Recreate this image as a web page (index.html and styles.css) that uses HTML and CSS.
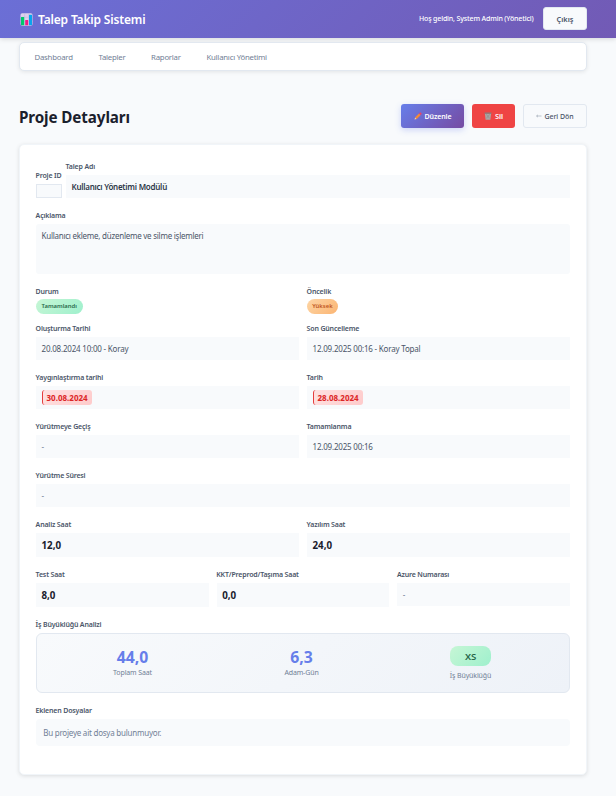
FILE: index.html
```html
<!DOCTYPE html>
<html lang="tr">
<head>
<meta charset="utf-8">
<title>Talep Takip Sistemi</title>
<link rel="stylesheet" href="styles.css">
</head>
<body>
<header class="header">
  <div class="brand">
    <svg class="brand-icon" viewBox="0 0 13 13"><rect x=".5" y=".3" width="12" height="12.4" rx="1.6" fill="#dcd0ec"/><path d="M4.6 .5v12M8.6 .5v12M.5 4.3h12M.5 8.5h12" stroke="#c3b4e0" stroke-width=".5"/><rect x="1" y="4" width="3.2" height="8.3" rx=".3" fill="#00c96b"/><rect x="5.2" y="7" width="3" height="5.3" rx=".3" fill="#f01a86"/><rect x="9" y="1.8" width="3" height="10.5" rx=".3" fill="#08a5ee"/></svg>
    <span class="brand-name">Talep Takip Sistemi</span>
  </div>
  <div class="user">
    <span class="welcome">Hoş geldin, System Admin (Yönetici)</span>
    <a class="btn logout">Çıkış</a>
  </div>
</header>
<nav class="nav">
  <a>Dashboard</a><a>Talepler</a><a>Raporlar</a><a>Kullanıcı Yönetimi</a>
</nav>
<main class="main">
  <div class="page-head">
    <h1>Proje Detayları</h1>
    <div class="actions">
      <a class="btn edit"><svg class="ico" viewBox="0 0 8 8"><path d="M.5 7.6l.7-2.4L2.8 6.9z" fill="#f6cfa0"/><path d="M1.2 5.2L5 1.4l1.7 1.7L2.8 6.9z" fill="#f58a35"/><path d="M5 1.4l.9-.8q.4-.4.9 0l.7.8q.4.4 0 .8l-.8.9z" fill="#ee4164"/></svg>Düzenle</a>
      <a class="btn delete"><svg class="ico" viewBox="0 0 8 8"><path d="M.9 1.4h6.2L6.4 7.8H1.6z" fill="#a9a5a4"/><path d="M2.4 2.4l3.2 4M5.6 2.4l-3.2 4" stroke="#8d8381" stroke-width=".5"/><rect x=".5" y=".6" width="7" height="1.2" rx=".4" fill="#857c7a"/></svg>Sil</a>
      <a class="btn back"><svg class="arrow" viewBox="0 0 6 4"><path d="M.5 2h5M2 .8L.6 2 2 3.2" fill="none" stroke="#a3acb9" stroke-width=".7"/></svg>Geri Dön</a>
    </div>
  </div>
  <section class="card">
    <div class="row first">
      <div class="field id"><label>Proje ID</label><div class="id-box"></div></div>
      <div class="field grow"><label>Talep Adı</label><div class="value title">Kullanıcı Yönetimi Modülü</div></div>
    </div>
    <div class="row"><div class="field"><label>Açıklama</label><div class="value description">Kullanıcı ekleme, düzenleme ve silme işlemleri</div></div></div>
    <div class="row cols-2 status">
      <div class="field"><label>Durum</label><span class="pill done">Tamamlandı</span></div>
      <div class="field"><label>Öncelik</label><span class="pill high">Yüksek</span></div>
    </div>
    <div class="row cols-2">
      <div class="field"><label>Oluşturma Tarihi</label><div class="value">20.08.2024 10:00 - Koray</div></div>
      <div class="field"><label>Son Güncelleme</label><div class="value">12.09.2025 00:16 - Koray Topal</div></div>
    </div>
    <div class="row cols-2">
      <div class="field"><label>Yaygınlaştırma tarihi</label><div class="value"><span class="date">30.08.2024</span></div></div>
      <div class="field"><label>Tarih</label><div class="value"><span class="date">28.08.2024</span></div></div>
    </div>
    <div class="row cols-2">
      <div class="field"><label>Yürütmeye Geçiş</label><div class="value empty">-</div></div>
      <div class="field"><label>Tamamlanma</label><div class="value">12.09.2025 00:16</div></div>
    </div>
    <div class="row"><div class="field"><label>Yürütme Süresi</label><div class="value empty">-</div></div></div>
    <div class="row cols-2">
      <div class="field"><label>Analiz Saat</label><div class="value hours">12,0</div></div>
      <div class="field"><label>Yazılım Saat</label><div class="value hours">24,0</div></div>
    </div>
    <div class="row cols-3">
      <div class="field"><label>Test Saat</label><div class="value hours">8,0</div></div>
      <div class="field"><label>KKT/Preprod/Taşıma Saat</label><div class="value hours">0,0</div></div>
      <div class="field"><label>Azure Numarası</label><div class="value empty">-</div></div>
    </div>
    <div class="row"><div class="field"><label>İş Büyüklüğü Analizi</label>
      <div class="analysis">
        <div class="metric"><strong>44,0</strong><span>Toplam Saat</span></div>
        <div class="metric"><strong>6,3</strong><span>Adam-Gün</span></div>
        <div class="metric"><b class="size">XS</b><span>İş Büyüklüğü</span></div>
      </div></div></div>
    <div class="row"><div class="field"><label>Eklenen Dosyalar</label><div class="files">Bu projeye ait dosya bulunmuyor.</div></div></div>
  </section>
</main>
</body>
</html>
```
FILE: styles.css
```css
* { box-sizing: border-box; }
body {
  margin: 0;
  height: 796px;
  overflow: hidden;
  background: #f8fafc;
  color: #4a5568;
  font-family: "Noto Sans", "Open Sans", sans-serif;
  font-size: 8px;
}
.header {
  height: 38px;
  padding: 0 29px 0 20px;
  display: flex;
  align-items: center;
  justify-content: space-between;
  color: #fff;
  background: linear-gradient(135deg, #6b6fd6 0%, #725ab5 100%);
  box-shadow: 0 1px 5px rgba(0, 0, 0, .15);
}
.brand { display: flex; align-items: center; gap: 5px; padding-top: 1px; }
.brand-icon { width: 13px; height: 13px; }
.brand-name { font-size: 12px; font-weight: 600; letter-spacing: -.17px; line-height: 16px; }
.user { display: flex; align-items: center; gap: 9.5px; padding-bottom: 1px; }
.welcome { font-size: 7px; font-weight: 500; letter-spacing: -.15px; }
.btn {
  display: flex;
  align-items: center;
  justify-content: center;
  height: 24px;
  border-radius: 3px;
  font-weight: 600;
}
.logout {
  width: 44px;
  height: 23px;
  border: 1px solid #e2e8f0;
  background: #f8fafc;
  color: #4a5568;
  font-size: 7.4px;
}
.nav {
  height: 29px;
  margin: 4px 29px 0 19px;
  padding: 0 14.5px;
  display: flex;
  align-items: center;
  gap: 25.7px;
  background: #fff;
  border: 1px solid #e2e8f0;
  border-radius: 5px;
  box-shadow: 0 1px 4px rgba(0, 0, 0, .09);
  color: #718096;
  font-size: 7.8px;
  letter-spacing: -.24px;
}
.main { padding: 33px 29px 0 19px; }
.page-head { display: flex; justify-content: space-between; height: 24px; }
h1 { margin: 2px 0 0; font-size: 15.2px; letter-spacing: -.1px; line-height: 22px; font-weight: 700; color: #1a202c; }
.actions { display: flex; gap: 8px; }
.ico { width: 8px; height: 8px; margin-right: 3px; }
.arrow { width: 6px; height: 4px; margin-right: 2px; }
.edit {
  width: 63px;
  color: #fff;
  font-size: 7px;
  letter-spacing: -.1px;
  background: linear-gradient(135deg, #667eea, #764ba2);
  box-shadow: 0 2px 6px rgba(102, 126, 234, .3);
}
.delete { width: 43px; color: #fff; background: #ef4444; font-size: 7.4px; }
.back { width: 64px; border: 1px solid #e2e8f0; color: #4a5568; font-size: 7px; letter-spacing: -.05px; font-weight: 500; }
.card {
  height: 631px;
  margin-top: 16px;
  padding: 17px 16px 16px;
  background: #fff;
  border: 1px solid #f1f5f9;
  border-radius: 5px;
  box-shadow: 0 1px 4px rgba(0, 0, 0, .12);
}
.row { margin-bottom: 13px; }
.status { margin-bottom: 10px; }
.first { display: flex; align-items: flex-end; gap: 4px; }
.grow { flex: 1; }
.cols-2, .cols-3 { display: grid; gap: 8px; align-items: start; }
.cols-2 { grid-template-columns: repeat(2, 1fr); }
.cols-3 { grid-template-columns: repeat(3, 1fr); }
label {
  display: block;
  height: 10px;
  margin: 0 0 3px -.4px;
  line-height: 10px;
  font-size: 7px;
  font-weight: 600;
  letter-spacing: -.17px;
  white-space: nowrap;
}
.field.id { width: 26px; }
.id-box { height: 14px; border: 1px solid #e2e8f0; background: #f8fafc; }
.value {
  height: 23px;
  padding: 0 5.5px;
  display: flex;
  align-items: center;
  background: #f8fafc;
  line-height: 12px;
  font-size: 8px;
  letter-spacing: -.2px;
}
.title { font-weight: 600; letter-spacing: -.25px; color: #2d3748; }
.description { height: 50px; padding-top: 6px; align-items: flex-start; border-radius: 3px; letter-spacing: -.25px; }
.empty { color: #718096; }
.hours { height: 24px; padding-top: 1px; font-size: 9.75px; letter-spacing: 0; font-weight: 700; color: #1a202c; }
.pill {
  display: block;
  width: max-content;
  height: 15px;
  margin-top: -1px;
  padding: 0 5.6px;
  border-radius: 8px;
  font-size: 5.9px;
  font-weight: 600;
  line-height: 15px;
}
.done { color: #276749; background: linear-gradient(135deg, #c6f6d5, #9ff0cd); }
.high { padding: 0 5.2px; color: #c05621; background: linear-gradient(135deg, #fdd5a5, #fbb573); }
.date {
  height: 15px;
  padding: 0 4.5px 0 4px;
  border-left: 1px solid #e53e3e;
  border-radius: 3px;
  background: linear-gradient(135deg, #fee2e2, #fecaca);
  color: #dc2626;
  font-size: 8px;
  letter-spacing: 0;
  font-weight: 700;
  line-height: 16px;
}
.analysis {
  height: 60px;
  padding: 12px 14px 12px 11px;
  display: grid;
  grid-template-columns: repeat(3, 1fr);
  border: 1px solid #e2e8f0;
  border-radius: 6px;
  background: linear-gradient(135deg, #f8fafc, #eef2f8);
}
.metric { display: flex; flex-direction: column; align-items: center; color: #718096; font-size: 7px; letter-spacing: -.13px; line-height: 10px; }
.metric:not(:last-child) span { margin-top: -1.5px; }
.metric strong { margin-bottom: 1.5px; color: #667eea; font-size: 15.74px; letter-spacing: 0; line-height: 22px; }
.size {
  width: 41px;
  height: 20px;
  margin-bottom: 4.5px;
  border-radius: 8px;
  background: linear-gradient(135deg, #c6f6d5, #9ff0cd);
  color: #276749;
  font-size: 9.6px;
  font-weight: 600;
  line-height: 21px;
  text-align: center;
}
.files { height: 27px; padding: 0 7.2px; border-radius: 4px; background: #f8fafc; color: #718096; letter-spacing: -.23px; line-height: 28px; }
```
